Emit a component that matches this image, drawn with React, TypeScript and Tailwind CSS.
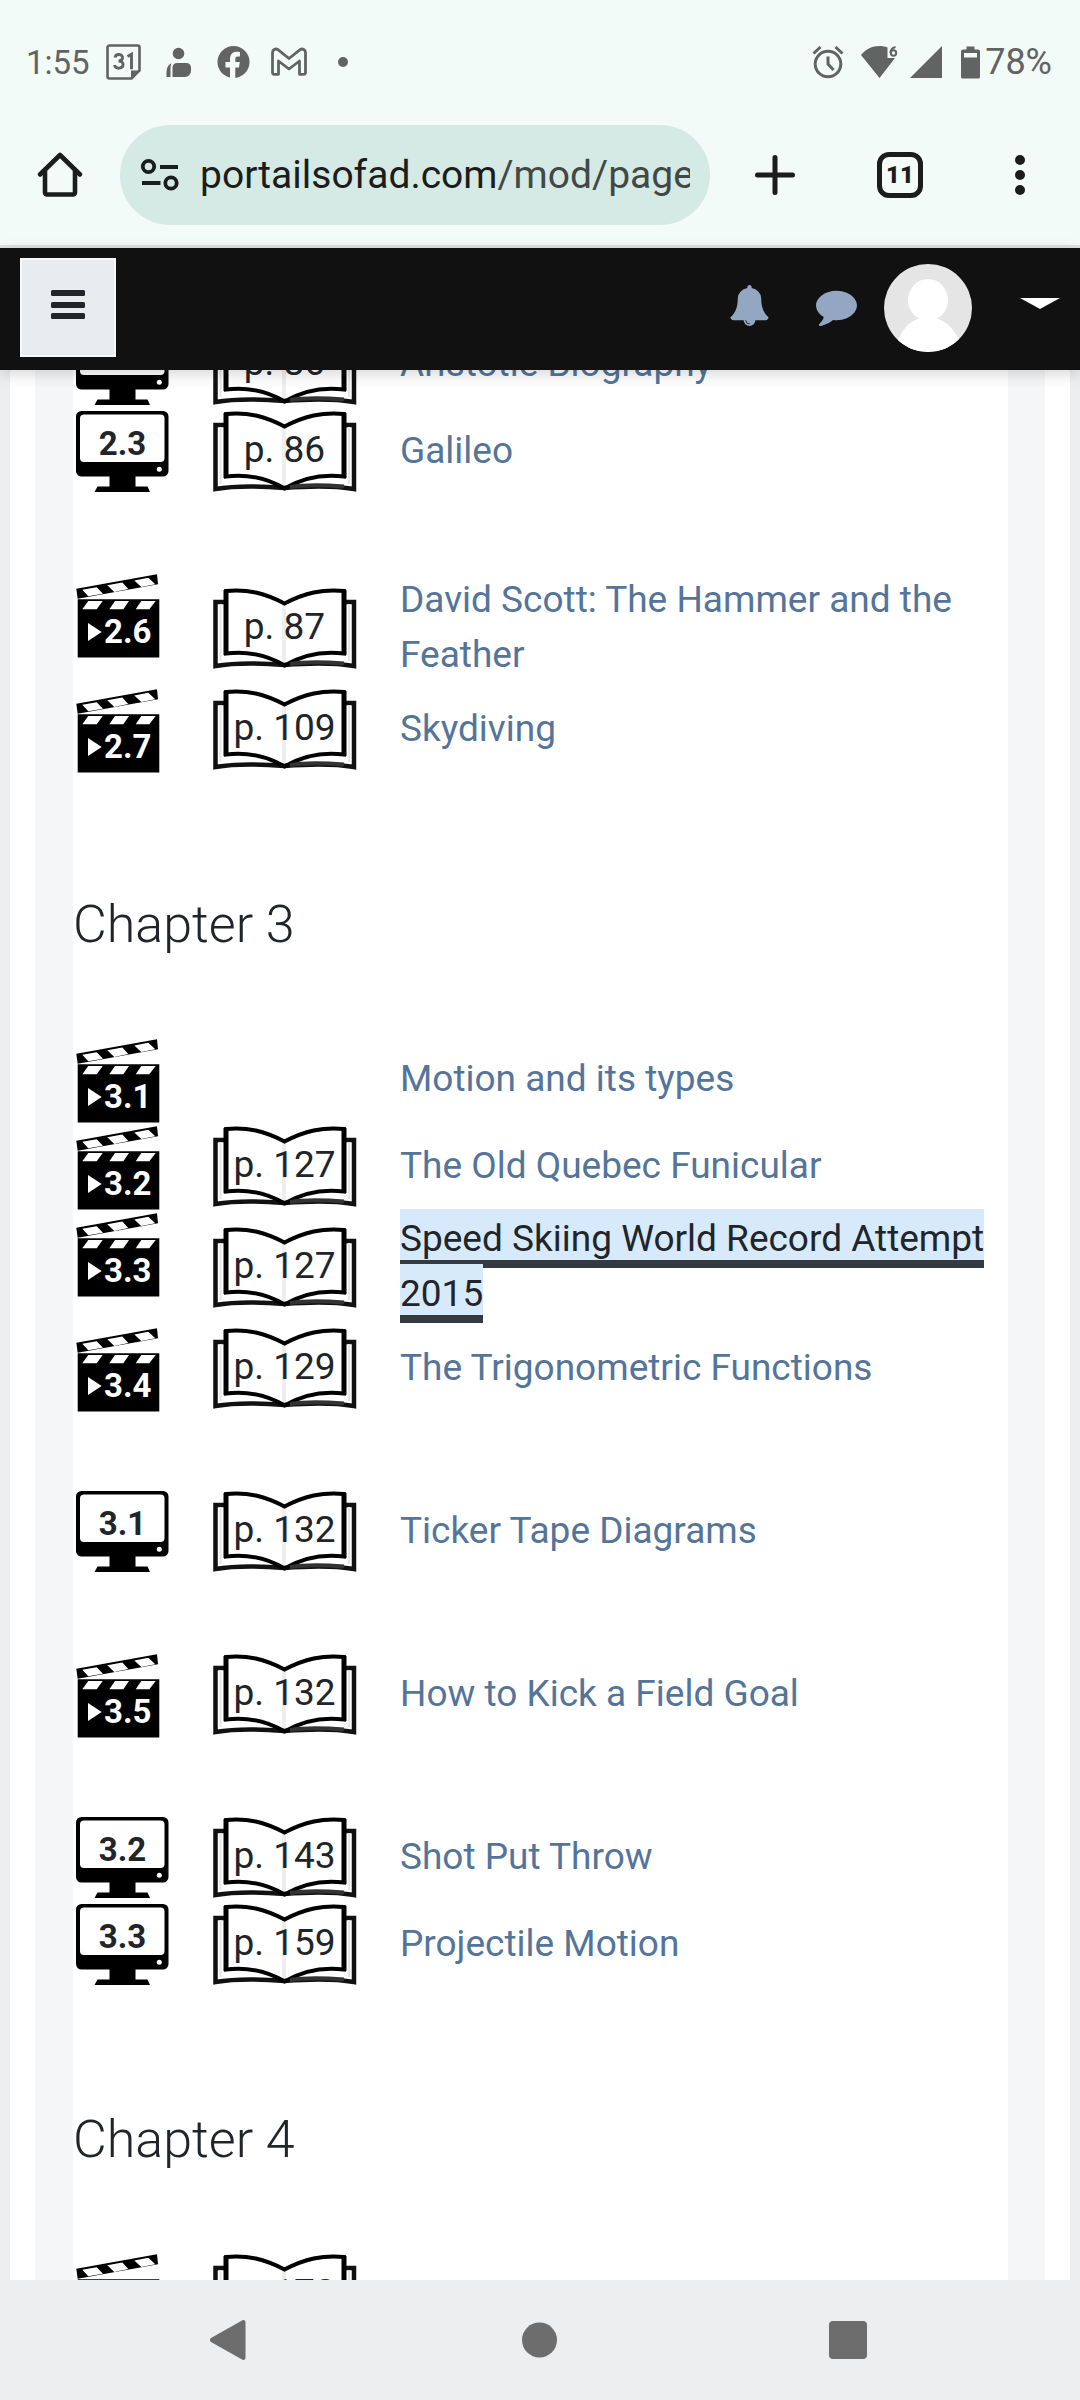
import type { ReactNode } from "react";

type Resource = {
  kind: "video" | "screen";
  label: string;
  page?: string;
  title: string;
  focused?: boolean;
};

type Chapter = {
  name?: string;
  groups: Resource[][];
};

const chapters: Chapter[] = [
  {
    groups: [
      [
        { kind: "screen", label: "2.2", page: "p. 86", title: "Aristotle Biography" },
        { kind: "screen", label: "2.3", page: "p. 86", title: "Galileo" },
      ],
      [
        {
          kind: "video",
          label: "2.6",
          page: "p. 87",
          title: "David Scott: The Hammer and the Feather",
        },
        { kind: "video", label: "2.7", page: "p. 109", title: "Skydiving" },
      ],
    ],
  },
  {
    name: "Chapter 3",
    groups: [
      [
        { kind: "video", label: "3.1", title: "Motion and its types" },
        { kind: "video", label: "3.2", page: "p. 127", title: "The Old Quebec Funicular" },
        {
          kind: "video",
          label: "3.3",
          page: "p. 127",
          title: "Speed Skiing World Record Attempt 2015",
          focused: true,
        },
        { kind: "video", label: "3.4", page: "p. 129", title: "The Trigonometric Functions" },
      ],
      [{ kind: "screen", label: "3.1", page: "p. 132", title: "Ticker Tape Diagrams" }],
      [{ kind: "video", label: "3.5", page: "p. 132", title: "How to Kick a Field Goal" }],
      [
        { kind: "screen", label: "3.2", page: "p. 143", title: "Shot Put Throw" },
        { kind: "screen", label: "3.3", page: "p. 159", title: "Projectile Motion" },
      ],
    ],
  },
  {
    name: "Chapter 4",
    groups: [[{ kind: "video", label: "4.1", page: "p. 170", title: "Snow ropes, Särna" }]],
  },
];

function StatusBar() {
  return (
    <div className="flex h-[110px] items-center pt-[14px] pr-7 pl-[26px] text-[36px] leading-none text-[#616462]">
      <span className="w-20 text-[33px]">1:55</span>
      <div className="flex items-center gap-[19px]">
        {/* calendar */}
        <svg className="h-9 w-9" viewBox="0 0 36 36" fill="none" stroke="currentColor">
          <path
            d="M3.5 1.5h28a2 2 0 0 1 2 2v23l-8 8h-22a2 2 0 0 1-2-2v-29a2 2 0 0 1 2-2z"
            strokeWidth="2.6"
          />
          <path d="M25 34.5v-8h8.500z" fill="currentColor" stroke="none" />
          <path
            d="M9 13.500c1-4.500 8-3.500 7.500.500c-.3 2-2 3-4 3c2.500 0 4.600 1.300 4.600 3.600c0 4.400-7.600 5-8.600.400M21.500 12.500l4-2.300v15"
            strokeWidth="2.900"
          />
        </svg>
        {/* person */}
        <svg className="h-9 w-9" viewBox="0 0 36 36" fill="currentColor">
          <circle cx="17.500" cy="9.500" r="5.800" />
          <path d="M16 19h9.500a4.500 4.500 0 0 1 4.500 4.500v3.500a6 6 0 0 1-6 6H11.500v-9.500a4.500 4.500 0 0 1 4.500-4.500z" />
          <path d="M9.800 19.500c-3 1.500-4.300 5-4.300 9V33h4v-9c0-1.700.4-3.200.9-4.500z" />
        </svg>
        {/* facebook */}
        <svg className="h-9 w-9" viewBox="0 0 36 36">
          <circle cx="17.500" cy="18" r="16" fill="currentColor" />
          <path
            d="M14 35V23.500h-4.500V18H14v-3c0-4.600 2.600-7.300 7-7.300 1.200 0 2.500.2 3 .3v4.500h-2c-2 0-2.700 1.200-2.700 2.700V18h4.500l-.8 5.500h-3.700V35z"
            fill="#f2fbf8"
          />
        </svg>
        {/* gmail */}
        <svg
          className="h-9 w-9"
          viewBox="0 0 36 36"
          fill="none"
          stroke="currentColor"
          strokeWidth="2.800"
          strokeLinejoin="round"
        >
          <path d="M3 30.300h4.500V17l10.500 8 10.500-8v13.300H33a1.500 1.500 0 0 0 1.500-1.500V8.500c0-3-3.300-4.500-5.700-2.600L18 14.500 7.200 5.900C4.800 4 1.500 5.500 1.500 8.500v20.300A1.500 1.500 0 0 0 3 30.300z" />
        </svg>
        <svg className="h-9 w-9" viewBox="0 0 36 36" fill="currentColor">
          <circle cx="17" cy="18" r="5" />
        </svg>
      </div>
      <div className="ml-auto flex items-center gap-3">
        {/* alarm */}
        <svg
          className="h-9 w-9"
          viewBox="0 0 36 36"
          fill="none"
          stroke="currentColor"
          strokeWidth="3"
        >
          <circle cx="16" cy="20" r="12.800" />
          <path d="M16 12.500V20l5.500 6M1.500 9.500l7-6.500M30.500 9.500l-7-6.500" />
        </svg>
        {/* wifi 6 */}
        <svg className="h-9 w-[38px]" viewBox="0 0 38 36" fill="currentColor">
          <path d="M1 11C6 5 12 2 19.500 2c3 0 5.500.500 8 1.500V14h7.500L19.500 34z" />
          <path
            d="M35.500 3c-3.500 1-5 3.500-5 6"
            fill="none"
            stroke="currentColor"
            strokeWidth="2"
          />
          <circle cx="33.500" cy="9" r="2.700" fill="none" stroke="currentColor" strokeWidth="2" />
        </svg>
        {/* signal */}
        <svg className="h-9 w-9" viewBox="0 0 36 36" fill="currentColor">
          <path d="M32 2v32H0z" />
        </svg>
        <div className="flex items-center gap-[3px]">
          {/* battery */}
          <svg className="h-9 w-6" viewBox="0 0 24 36" fill="currentColor">
            <path
              fillRule="evenodd"
              d="M8.500 2.500h8v3H20a2 2 0 0 1 2 2V33a1.500 1.500 0 0 1-1.500 1.500h-16A1.500 1.500 0 0 1 3 33V7.500a2 2 0 0 1 2-2h3.500zM6 9v4.500h13V9z"
            />
          </svg>
          <span>78%</span>
        </div>
      </div>
    </div>
  );
}

function BrowserBar() {
  return (
    <div className="flex h-[138px] items-center border-b-3 border-[#dbe5e1] pb-[5px] text-[#1b1d1c]">
      <button aria-label="Home" className="flex w-[120px] justify-center">
        <svg
          className="h-12 w-12"
          viewBox="0 0 48 48"
          fill="none"
          stroke="currentColor"
          strokeWidth="4.600"
          strokeLinecap="round"
          strokeLinejoin="round"
        >
          <path d="M4 23.500L24 4l20 19.500" />
          <path d="M9 20v21.500a2 2 0 0 0 2 2h26a2 2 0 0 0 2-2V20" />
        </svg>
      </button>
      <button
        aria-label="Address bar"
        className="flex h-[100px] min-w-0 flex-1 items-center gap-5 rounded-full bg-[#d5eae4] pr-5 pl-5 text-left text-[39px]"
      >
        <svg
          className="h-9 w-10 shrink-0"
          viewBox="0 0 40 36"
          fill="none"
          stroke="currentColor"
          strokeWidth="3.800"
        >
          <circle cx="8.500" cy="9.500" r="5.700" />
          <path d="M20 10h18M2 26h18.500" />
          <circle cx="31" cy="26" r="5.700" />
        </svg>
        <span className="min-w-0 overflow-hidden whitespace-nowrap">
          portailsofad.com<span className="text-[#414946]">/mod/page</span>
        </span>
      </button>
      <button aria-label="New tab" className="flex w-[130px] justify-center">
        <svg
          className="h-12 w-12"
          viewBox="0 0 48 48"
          stroke="currentColor"
          strokeWidth="5"
          strokeLinecap="round"
        >
          <path d="M24 6.500v35M6.500 24h35" />
        </svg>
      </button>
      <div className="flex w-[120px] justify-center">
        <button
          aria-label="Open tabs"
          className="flex h-[46px] w-[46px] items-center justify-center rounded-xl border-[5px] border-[#1b1d1c] text-2xl leading-none font-black"
        >
          11
        </button>
      </div>
      <button aria-label="More" className="flex w-[120px] justify-center">
        <svg className="h-12 w-12" viewBox="0 0 48 48" fill="currentColor">
          <circle cx="24" cy="9" r="5" />
          <circle cx="24" cy="24" r="5" />
          <circle cx="24" cy="39" r="5" />
        </svg>
      </button>
    </div>
  );
}

function SiteHeader() {
  return (
    <header className="relative z-10 flex h-[122px] items-center bg-[#111111] px-5 pb-[3px] shadow-[0_4px_14px_rgba(0,0,0,0.16)]">
      <button
        aria-label="Side panel"
        className="flex h-[99px] w-24 items-center justify-center border-2 border-[#f8f9fa] bg-[#e9ecef] pb-1"
      >
        <svg className="h-9 w-9" viewBox="0 0 36 36" fill="#212529">
          <rect x="1" y="2" width="34" height="6" rx="1.500" />
          <rect x="1" y="14" width="34" height="6" rx="1.500" />
          <rect x="1" y="25" width="34" height="6" rx="1.500" />
        </svg>
      </button>
      <div className="ml-auto flex items-center text-[#93a6c2]">
        <button aria-label="Notifications" className="mr-[46px] pb-1">
          <svg className="h-[41px] w-[41px]" viewBox="0 0 1792 1792" fill="currentColor">
            <path d="M912 1696q0-16-16-16-59 0-101.500-42.500t-42.500-101.500q0-16-16-16t-16 16q0 73 51.500 124.500t124.500 51.500q16 0 16-16zm816-288q0 52-38 90t-90 38h-448q0 106-75 181t-181 75-181-75-75-181h-448q-52 0-90-38t-38-90q50-42 91-88t85-119.500 74.500-158.500 50-206 19.500-260q0-152 117-282.500t307-158.500q-8-19-8-39 0-40 28-68t68-28 68 28 28 68q0 20-8 39 190 28 307 158.500t117 282.500q0 139 19.500 260t50 206 74.500 158.500 85 119.500 91 88z" />
          </svg>
        </button>
        <button aria-label="Messages" className="mr-[27px] pb-1">
          <svg className="h-[41px] w-[41px]" viewBox="0 0 1792 1792" fill="currentColor">
            <path d="M1792 896q0 174-120 321.500t-326 233-450 85.500q-70 0-145-8-198 175-460 242-49 14-114 22-17 2-30.500-9t-17.500-29v-1q-3-4-.5-12t2-10 4.500-9.500l6-9 7-8.500 8-9q7-8 31-34.500t34.500-38 31-39.500 32.500-51 27-59 26-76q-157-89-247.500-220t-90.500-281q0-130 71-248.500t191-204.500 286-136.500 348-50.500q244 0 450 85.500t326 233 120 321.500z" />
          </svg>
        </button>
        <button aria-label="User menu" className="flex items-center gap-12">
          <svg className="h-[88px] w-[88px] rounded-full" viewBox="0 0 88 88">
            <rect width="88" height="88" fill="#e5e5e5" />
            <path d="M14 76C20 61 30 55 38 54h12c8 1 18 7 25 22v12H14z" fill="#fff" />
            <ellipse cx="44" cy="36" rx="20" ry="21" fill="#fff" />
          </svg>
          <svg className="h-5 w-10" viewBox="0 0 40 20" fill="#fff">
            <path d="M0 0h40L20 11z" />
          </svg>
        </button>
      </div>
    </header>
  );
}

function ScreenIcon({ label }: { label: string }) {
  return (
    <div className="relative h-[81px] w-[93px]">
      <svg className="block h-[81px] w-[93px]" viewBox="0 0 93 81">
        <rect width="92.500" height="65.500" rx="5.500" />
        <rect x="4" y="3.500" width="84.500" height="47.500" rx="4" fill="#fff" />
        <circle cx="83.300" cy="58.300" r="2.500" fill="#fff" />
        <path d="M33.500 65h26v10.500h12L74 81H18.500l3-5.500h12z" />
      </svg>
      <span className="absolute inset-x-0 top-4 text-center text-[33px] leading-none font-bold">
        {label}
      </span>
    </div>
  );
}

function VideoIcon({ label }: { label: string }) {
  return (
    <div className="relative h-[81px] w-[84px]">
      <svg className="block h-[84px] w-[84px]" viewBox="0 0 84 84">
        <path d="M0.300 14.700L81 .3l1 10L1.700 24.700z" />
        <path d="M1.700 25.300h81.600v58.200H1.700z" />
        <g fill="#fff">
          <path d="M6.300 15.700l14.400-2.400 6.300 6.400-14.700 2.600z" />
          <path d="M31.300 11.200l15-2.600 6 6.500-14 2.800z" />
          <path d="M58.300 6.500l14-2.700 7 6.400-14 2.700z" />
          <path d="M12.300 27h14.400l-6 8.300H6.300z" />
          <path d="M39 27h14l-5.700 8.300h-14z" />
          <path d="M65.300 27h14.400l-6.400 8.300H59.700z" />
          <path d="M12 49l13.700 9L12 67z" />
        </g>
      </svg>
      <span className="absolute top-[41px] left-7 text-[33px] leading-none font-bold text-white">
        {label}
      </span>
    </div>
  );
}

function BookIcon({ page }: { page: string }) {
  return (
    <div className="relative mt-[6px] h-[81px] w-[145px]">
      <svg className="block h-[81px] w-[145px]" viewBox="0 0 145 81" fill="none" stroke="#000">
        <path d="M72 17v58" stroke="#eeeeee" strokeWidth="4" />
        <path
          d="M12 14H3.500v64C24 74.500 48 75 72.500 77C97 75 121 74.500 142 78V14h-9"
          stroke="#111"
          strokeWidth="4.500"
        />
        <path d="M8.500 16v57M137 16v57" stroke="#e6e6e6" strokeWidth="2" />
        <path
          d="M14 3C36 1 52 5 72.500 15.500C93 5 110 1 132 3V65.500C112 63 92 66 72.500 77.500C53 66 34 63 14 65.500z"
          strokeWidth="4"
        />
        <path d="M14 2V67M132 2V67" strokeWidth="5" />
        <path d="M78 76c16-2.500 34-2 54-.5" stroke="#333" strokeWidth="4" />
      </svg>
      <span className="absolute inset-x-0 top-5 text-center leading-none">{page}</span>
    </div>
  );
}

function ResourceRow({ item }: { item: Resource }) {
  return (
    <tr className="h-[87px]">
      <td className="w-[139px] pt-[6px] pl-[3px] align-top">
        {item.kind === "screen" ? (
          <ScreenIcon label={item.label} />
        ) : (
          <VideoIcon label={item.label} />
        )}
      </td>
      <td className="w-[188px] align-middle">{item.page && <BookIcon page={item.page} />}</td>
      <td className="pt-1 pb-px align-middle leading-[55px]">
        <a
          href="#"
          className={
            item.focused
              ? "bg-[#d7eafc] text-[#212529] shadow-[0_-8px_#d7eafc,0_8px_#343a40]"
              : "text-[#54749a]"
          }
        >
          {item.title}
        </a>
      </td>
    </tr>
  );
}

function NavButton({ label, children }: { label: string; children: ReactNode }) {
  return (
    <button aria-label={label}>
      <svg className="h-10 w-10" viewBox="0 0 40 40" fill="#6d6d6d">
        {children}
      </svg>
    </button>
  );
}

export default function App() {
  return (
    <div className="flex h-screen flex-col bg-[#f2fbf8] font-['Roboto',sans-serif]">
      <StatusBar />
      <BrowserBar />
      <SiteHeader />
      <main className="min-h-0 flex-1 overflow-hidden bg-[#eceef0] px-[10px]">
        <div className="bg-white px-[25px]">
          <div className="bg-[#f4f6f8] pr-[37px] pl-[38px]">
            <div className="bg-white text-[37px] text-[#212529]">
              {/* the first row is scrolled partly under the header */}
              <div className="-mt-[52px] pb-10">
                {chapters.map((chapter, i) => (
                  <section key={i}>
                    {chapter.name && (
                      <h2 className="pt-[124px] pb-[77px] text-[52px] leading-[62px] font-light">
                        {chapter.name}
                      </h2>
                    )}
                    <div className="flex flex-col gap-[76px]">
                      {chapter.groups.map((group, j) => (
                        <table key={j} className="w-full table-fixed">
                          <tbody>
                            {group.map((item) => (
                              <ResourceRow key={item.kind + item.label} item={item} />
                            ))}
                          </tbody>
                        </table>
                      ))}
                    </div>
                  </section>
                ))}
              </div>
            </div>
          </div>
        </div>
      </main>
      <nav className="flex h-[120px] items-center justify-between bg-[#eceef0] pr-[212px] pl-[208px]">
        <NavButton label="Back">
          <path d="M34 0.500c2-1 3.500 0 3.500 2v35c0 2-1.500 3-3.500 2L3 22c-1.500-1-1.500-3 0-4z" />
        </NavButton>
        <NavButton label="Home screen">
          <circle cx="21.500" cy="20" r="17.500" />
        </NavButton>
        <NavButton label="Recent apps">
          <rect x="1" y="1" width="38" height="38" rx="4" />
        </NavButton>
      </nav>
    </div>
  );
}
